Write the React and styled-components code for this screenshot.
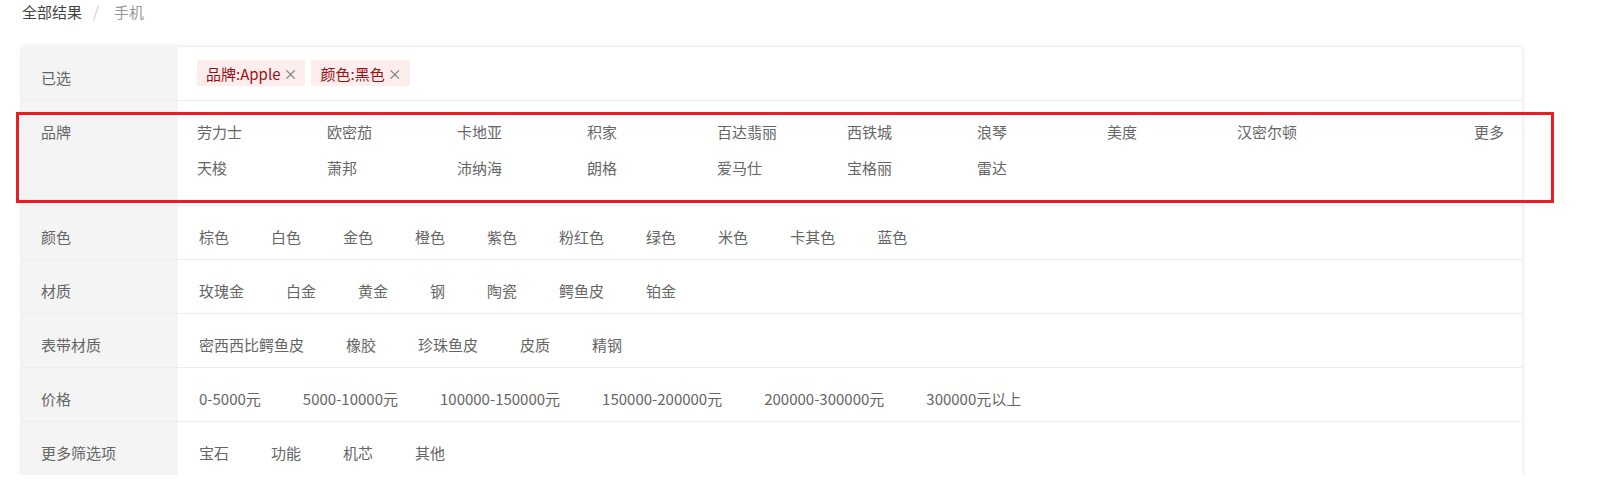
import React from "react";
import styled, { createGlobalStyle } from "styled-components";

const selected = [
  { key: "品牌", value: "Apple" },
  { key: "颜色", value: "黑色" },
];

const brands = [
  "劳力士", "欧密茄", "卡地亚", "积家", "百达翡丽", "西铁城", "浪琴", "美度", "汉密尔顿",
  "天梭", "萧邦", "沛纳海", "朗格", "爱马仕", "宝格丽", "雷达",
];

const filters = [
  { name: "颜色", options: ["棕色", "白色", "金色", "橙色", "紫色", "粉红色", "绿色", "米色", "卡其色", "蓝色"] },
  { name: "材质", options: ["玫瑰金", "白金", "黄金", "钢", "陶瓷", "鳄鱼皮", "铂金"] },
  { name: "表带材质", options: ["密西西比鳄鱼皮", "橡胶", "珍珠鱼皮", "皮质", "精钢"] },
  { name: "价格", options: ["0-5000元", "5000-10000元", "100000-150000元", "150000-200000元", "200000-300000元", "300000元以上"] },
  { name: "更多筛选项", options: ["宝石", "功能", "机芯", "其他"] },
];

const App = () => {
  return (
    <Page>
      <GlobalStyle />
      <Breadcrumb>
        <CrumbLink>全部结果</CrumbLink>
        <CrumbSep>/</CrumbSep>
        <CrumbCurrent>手机</CrumbCurrent>
      </Breadcrumb>

      <Panel>
        <Row>
          <Label>已选</Label>
          <Values $top={13} $bottom={14}>
            {selected.map((s) => (
              <Tag key={s.key}>
                {s.key}:{s.value}
                <Close>×</Close>
              </Tag>
            ))}
          </Values>
        </Row>

        <Row>
          <Label>品牌</Label>
          <Values $top={20} $bottom={12}>
            <BrandList>
              {brands.map((b) => (
                <BrandItem key={b}>{b}</BrandItem>
              ))}
            </BrandList>
            <More>更多</More>
          </Values>
          <Highlight />
        </Row>

        {filters.map((f) => (
          <Row key={f.name}>
            <Label>{f.name}</Label>
            <Values $top={20} $bottom={11}>
              <OptionList>
                {f.options.map((o) => (
                  <Option key={o}>{o}</Option>
                ))}
              </OptionList>
            </Values>
          </Row>
        ))}
      </Panel>
    </Page>
  );
};

const GlobalStyle = createGlobalStyle`
  body {
    margin: 0;
    background: #fff;
    font-family: "Noto Sans CJK SC", "Liberation Sans", sans-serif;
  }
`;

const Page = styled.div`
  padding: 1px 22px 0 22px;
  font-size: 15px;
`;

const Breadcrumb = styled.div`
  display: flex;
  align-items: center;
  line-height: 22px;
`;

const CrumbLink = styled.span`
  color: #444;
`;

const CrumbSep = styled.span`
  color: #ccc;
  margin: 0 15px 0 11px;
`;

const CrumbCurrent = styled.span`
  color: #999;
`;

const Panel = styled.div`
  margin-top: 24px;
  width: 1500px;
  background: #fff;
  box-shadow: 0 0 5px rgba(0, 0, 0, 0.13);
`;

const Row = styled.div`
  position: relative;
  display: flex;
  border-bottom: 1px solid #ececec;

  &:last-child {
    border-bottom: none;
  }
`;

const Label = styled.div`
  width: 156px;
  flex-shrink: 0;
  box-sizing: border-box;
  padding: 20px 0 11px 19px;
  background: #f4f4f4;
  color: #666;
  line-height: 22px;
`;

const Values = styled.div`
  flex: 1;
  display: flex;
  align-items: flex-start;
  padding: ${(p) => p.$top}px 18px ${(p) => p.$bottom}px 19px;
`;

const Tag = styled.span`
  display: inline-flex;
  align-items: center;
  height: 26px;
  padding: 0 8px 0 9px;
  margin-right: 6px;
  background: #fdeded;
  color: #9a0f12;
`;

const Close = styled.span`
  margin-left: 3px;
  color: #777;
  font-size: 14px;
`;

const BrandList = styled.div`
  flex: 1;
  display: flex;
  flex-wrap: wrap;
`;

const BrandItem = styled.span`
  width: 130px;
  line-height: 22px;
  margin-bottom: 14px;
  color: #666;
`;

const More = styled.span`
  flex-shrink: 0;
  line-height: 22px;
  color: #666;
`;

const OptionList = styled.div`
  display: flex;
  flex-wrap: wrap;
  gap: 0 42px;
  margin-left: 2px;
`;

const Option = styled.span`
  line-height: 22px;
  color: #666;
  white-space: nowrap;
`;

const Highlight = styled.div`
  position: absolute;
  left: -6px;
  top: 11px;
  width: 1538px;
  height: 91px;
  box-sizing: border-box;
  border: 3px solid #ed1c24;
  pointer-events: none;
`;

export default App;
